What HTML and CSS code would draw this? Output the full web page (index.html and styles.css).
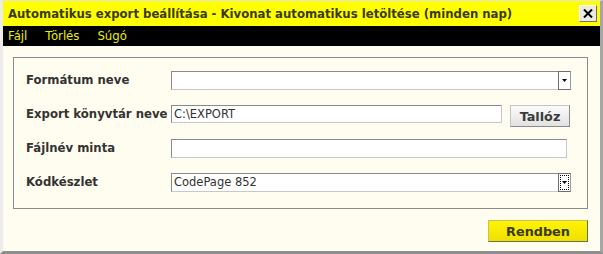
FILE: index.html
```html
<!DOCTYPE html>
<html lang="hu">
<head>
<meta charset="utf-8">
<title>Automatikus export beállítása</title>
<link rel="stylesheet" href="styles.css">
</head>
<body>
<div class="window">
  <div class="titlebar">
    <span class="title">Automatikus export beállítása - Kivonat automatikus letöltése (minden nap)</span>
    <button class="close" type="button" aria-label="Bezárás">
      <svg width="10" height="9" viewBox="0 0 10 9"><path d="M1 0.5 L9 8.5 M9 0.5 L1 8.5" stroke="#000" stroke-width="2" fill="none"/></svg>
    </button>
  </div>
  <div class="menubar">
    <span class="menu-item">Fájl</span>
    <span class="menu-item">Törlés</span>
    <span class="menu-item">Súgó</span>
  </div>
  <div class="content">
    <div class="group">
      <div class="row">
        <label class="label">Formátum neve</label>
        <div class="select wide">
          <span class="select-value"></span>
          <span class="drop"><svg width="5" height="3" viewBox="0 0 5 3"><path d="M0 0 H5 L2.5 3 Z" fill="#000"/></svg></span>
        </div>
      </div>
      <div class="row">
        <label class="label">Export könyvtár neve</label>
        <input class="field export" type="text" value="C:\EXPORT">
        <button class="btn browse" type="button">Tallóz</button>
      </div>
      <div class="row">
        <label class="label">Fájlnév minta</label>
        <input class="field pattern" type="text" value="">
      </div>
      <div class="row">
        <label class="label">Kódkészlet</label>
        <div class="select wide">
          <span class="select-value">CodePage 852</span>
          <span class="drop focus"><svg width="5" height="3" viewBox="0 0 5 3"><path d="M0 0 H5 L2.5 3 Z" fill="#000"/></svg></span>
        </div>
      </div>
    </div>
    <div class="actions">
      <button class="btn ok" type="button">Rendben</button>
    </div>
  </div>
</div>
</body>
</html>
```

FILE: styles.css
```css
html, body {
  margin: 0;
  padding: 0;
  background: #ffffff;
}
body {
  font-family: "DejaVu Sans", Verdana, sans-serif;
}
.window {
  width: 603px;
  height: 254px;
  box-sizing: border-box;
  border-top: 1px solid #e4e4e4;
  border-left: 3px solid #ececec;
  border-right: 3px solid #a6a6a6;
  border-bottom: 3px solid #8e8e8e;
  background: #fffdf0;
  display: flex;
  flex-direction: column;
}
.titlebar {
  height: 25px;
  background: #ffff00;
  display: flex;
  align-items: center;
  justify-content: space-between;
  padding: 0 3px 0 5px;
}
.title {
  font-size: 11.7px;
  font-weight: bold;
  color: #3a3a0a;
}
.close {
  width: 18px;
  height: 17px;
  margin: 0;
  padding: 0;
  box-sizing: border-box;
  background: #ece9e2;
  border: 1px solid;
  border-color: #ffffff #6e6e6e #6e6e6e #ffffff;
  display: flex;
  align-items: center;
  justify-content: center;
}
.menubar {
  height: 20px;
  background: #000000;
  display: flex;
  align-items: center;
  gap: 18px;
  padding-left: 5px;
}
.menu-item {
  font-size: 11.7px;
  color: #eeee00;
}
.content {
  flex: 1;
  padding: 11px 12px 0 10px;
}
.group {
  border: 1px solid #8a8a8a;
  box-shadow: inset 1px 1px 0 #ffffff;
  height: 152px;
  box-sizing: border-box;
  padding: 5px 0 0 12px;
}
.row {
  height: 34px;
  display: flex;
  align-items: center;
}
.label {
  width: 145px;
  font-size: 11.7px;
  font-weight: bold;
  color: #333333;
}
.field {
  box-sizing: border-box;
  height: 18px;
  margin: 0;
  padding: 0 2px;
  border: 1px solid;
  border-color: #8a8a8a #c8c8c8 #c8c8c8 #8a8a8a;
  background: #ffffff;
  font-family: "DejaVu Sans", Verdana, sans-serif;
  font-size: 11.5px;
  color: #333333;
  outline: none;
}
.field.export {
  width: 331px;
}
.field.pattern {
  width: 396px;
  height: 19px;
}
.select {
  box-sizing: border-box;
  height: 19px;
  border: 1px solid;
  border-color: #8a8a8a #c8c8c8 #c8c8c8 #8a8a8a;
  background: #ffffff;
  display: flex;
  align-items: stretch;
}
.select.wide {
  width: 400px;
}
.select-value {
  flex: 1;
  font-size: 11.5px;
  color: #333333;
  padding-left: 2px;
  line-height: 17px;
}
.drop {
  width: 13px;
  box-sizing: border-box;
  border: 1px solid #6e6e6e;
  border-right-color: #9a9a9a;
  background: #ffffff;
  margin: -1px -1px -1px 0;
  display: flex;
  align-items: center;
  justify-content: center;
}
.drop.focus {
  outline: 1px dotted #000000;
  outline-offset: -3px;
}
.btn {
  margin: 0;
  padding: 0;
  box-sizing: border-box;
  font-family: "DejaVu Sans", Verdana, sans-serif;
  font-size: 12.8px;
  font-weight: bold;
  cursor: default;
}
.browse {
  width: 60px;
  height: 22px;
  margin-left: 8px;
  margin-top: 4px;
  background: linear-gradient(#fbfbfb, #e2e2e2);
  border: 1px solid;
  border-color: #c4c4c4 #8a8a8a #8a8a8a #c4c4c4;
  color: #3a3a3a;
}
.actions {
  display: flex;
  justify-content: flex-end;
  padding-top: 11px;
}
.ok {
  width: 100px;
  height: 22px;
  background: linear-gradient(#fff400, #f0e000);
  border: 1px solid;
  border-color: #c8c060 #6e6e50 #6e6e50 #c8c060;
  color: #3a3a0a;
}
```
